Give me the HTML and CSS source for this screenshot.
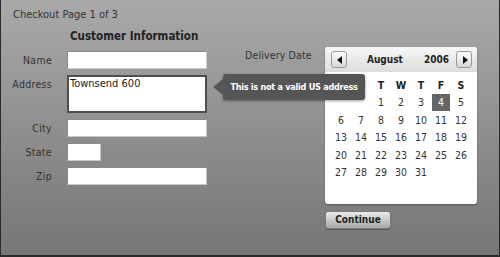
FILE: index.html
```html
<!DOCTYPE html>
<html lang="en">
<head>
    <meta charset="UTF-8">
    <meta name="viewport" content="width=device-width, initial-scale=1.0">
    <title>Checkout</title>
    <link rel="stylesheet" href="styles.css">
</head>
<body>
    <div class="screen">
        <div class="page-title">Checkout Page 1 of 3</div>

        <div class="checkout">
            <!-- Customer form -->
            <div class="customer">
                <h2>Customer Information</h2>
                <div class="fields">
                    <label for="name">Name</label>
                    <input type="text" id="name" class="field">

                    <label for="address">Address</label>
                    <textarea id="address" class="field invalid">Townsend 600</textarea>

                    <label for="city">City</label>
                    <input type="text" id="city" class="field">

                    <label for="state">State</label>
                    <input type="text" id="state" class="field short">

                    <label for="zip">Zip</label>
                    <input type="text" id="zip" class="field">
                </div>
            </div>

            <!-- Delivery date -->
            <div class="delivery">
                <div class="delivery-label">Delivery Date</div>
                <div class="delivery-side">
                    <div class="calendar">
                        <div class="cal-head">
                            <button class="nav prev"></button>
                            <span class="month">August</span>
                            <span class="year">2006</span>
                            <button class="nav next"></button>
                        </div>
                        <div class="cal-grid" id="calGrid"></div>
                    </div>
                    <button class="continue">Continue</button>
                </div>
            </div>
        </div>

        <div class="tooltip">This is not a valid US address</div>
    </div>

    <script>
        const calGrid = document.getElementById('calGrid');
        const dayNames = ['S', 'M', 'T', 'W', 'T', 'F', 'S'];
        const firstDay = 2; // August 1st 2006 was a Tuesday
        const selected = 4;

        dayNames.forEach(name => {
            const cell = document.createElement('div');
            cell.className = 'day-name';
            cell.textContent = name;
            calGrid.appendChild(cell);
        });

        for (let i = 0; i < 42; i++) {
            const day = i - firstDay + 1;
            const cell = document.createElement('div');
            cell.className = 'day';
            if (day >= 1 && day <= 31) {
                cell.textContent = day;
                if (day === selected) cell.classList.add('selected');
            }
            calGrid.appendChild(cell);
        }
    </script>
</body>
</html>
```
FILE: styles.css
```css
body {
    margin: 0;
    font-family: "DejaVu Sans Condensed", "DejaVu Sans", sans-serif;
    font-stretch: condensed;
    color: #333;
}

.screen {
    position: relative;
    width: 500px;
    height: 257px;
    box-sizing: border-box;
    border-left: 1px solid #2a2a2a;
    border-right: 1px solid #2a2a2a;
    border-bottom: 2px solid #2a2a2a;
    background: linear-gradient(#a9a9a9, #767676);
    overflow: hidden;
}

.page-title {
    padding: 8px 0 0 12px;
    font-size: 11px;
    line-height: 13px;
}

.checkout {
    display: flex;
}

.customer h2 {
    margin: 8px 0 8px 69px;
    font-size: 11.5px;
    line-height: 14px;
    color: #222;
}

.fields {
    display: grid;
    grid-template-columns: 51px 140px;
    column-gap: 15px;
    row-gap: 6px;
}

.fields label {
    text-align: right;
    font-size: 10.5px;
    line-height: 18px;
    letter-spacing: 0.3px;
    color: #333;
}

.field {
    box-sizing: border-box;
    width: 140px;
    height: 18px;
    margin: 0;
    padding: 0 3px;
    border: 1px solid #8a8a8a;
    border-bottom-color: #c8c8c8;
    border-right-color: #c8c8c8;
    background: #fff;
    font-family: inherit;
    font-size: 10px;
}

.field.short {
    width: 34px;
}

.field.invalid {
    height: 38px;
    padding: 0 1px;
    border: 2px solid #4e4e4e;
    resize: none;
    color: #222;
    font-size: 11px;
    line-height: 13px;
}

.delivery {
    display: flex;
    margin-top: 26px;
    margin-left: 38px;
}

.delivery-label {
    width: 80px;
    padding-top: 2px;
    font-size: 10.5px;
    line-height: 13px;
    letter-spacing: 0.15px;
}

.calendar {
    width: 152px;
    background: #fff;
    border-radius: 3px;
    box-shadow: 0 1px 2px rgba(0, 0, 0, 0.35);
    overflow: hidden;
}

.cal-head {
    display: flex;
    align-items: center;
    height: 25px;
    padding: 0 5px 0 6px;
    background: linear-gradient(#f8f8f8, #dcdcdc);
    font-size: 10px;
    font-weight: bold;
    color: #222;
}

.month {
    margin-left: 20px;
}

.year {
    margin-left: 21px;
}

.nav {
    position: relative;
    width: 16px;
    height: 17px;
    padding: 0;
    border: 1px solid #9a9a9a;
    border-radius: 3px;
    background: linear-gradient(#fdfdfd, #d6d6d6);
}

.nav.next {
    margin-left: auto;
}

.nav::after {
    content: "";
    position: absolute;
    top: 4px;
    border-top: 4px solid transparent;
    border-bottom: 4px solid transparent;
}

.nav.prev::after {
    left: 5px;
    border-right: 5px solid #111;
}

.nav.next::after {
    left: 6px;
    border-left: 5px solid #111;
}

.cal-grid {
    display: grid;
    grid-template-columns: repeat(7, 20px);
    grid-auto-rows: 17.5px;
    padding: 4px 6px 5px;
    font-size: 10.5px;
}

.day-name,
.day {
    display: flex;
    align-items: center;
    justify-content: center;
}

.day-name {
    font-weight: bold;
    color: #222;
}

.day.selected {
    margin: 0 1px;
    background: #666;
    color: #fff;
}

.continue {
    width: 66px;
    height: 18px;
    margin-top: 7px;
    padding: 0;
    border: 1px solid #7a7a7a;
    border-radius: 3px;
    background: linear-gradient(#ececec, #a6a6a6);
    box-shadow: 0 1px 1px rgba(0, 0, 0, 0.3);
    font-family: inherit;
    font-size: 10px;
    font-weight: bold;
    color: #222;
}

.tooltip {
    position: absolute;
    left: 222px;
    top: 74px;
    width: 142px;
    height: 26px;
    box-sizing: border-box;
    border-radius: 3px;
    background: #555;
    box-shadow: 0 1px 3px rgba(0, 0, 0, 0.4);
    font-size: 9px;
    font-weight: bold;
    line-height: 26px;
    letter-spacing: -0.25px;
    white-space: nowrap;
    text-align: center;
    color: #fff;
}

.tooltip::before {
    content: "";
    position: absolute;
    left: -10px;
    top: 5px;
    border-top: 8px solid transparent;
    border-bottom: 8px solid transparent;
    border-right: 10px solid #555;
}
```
